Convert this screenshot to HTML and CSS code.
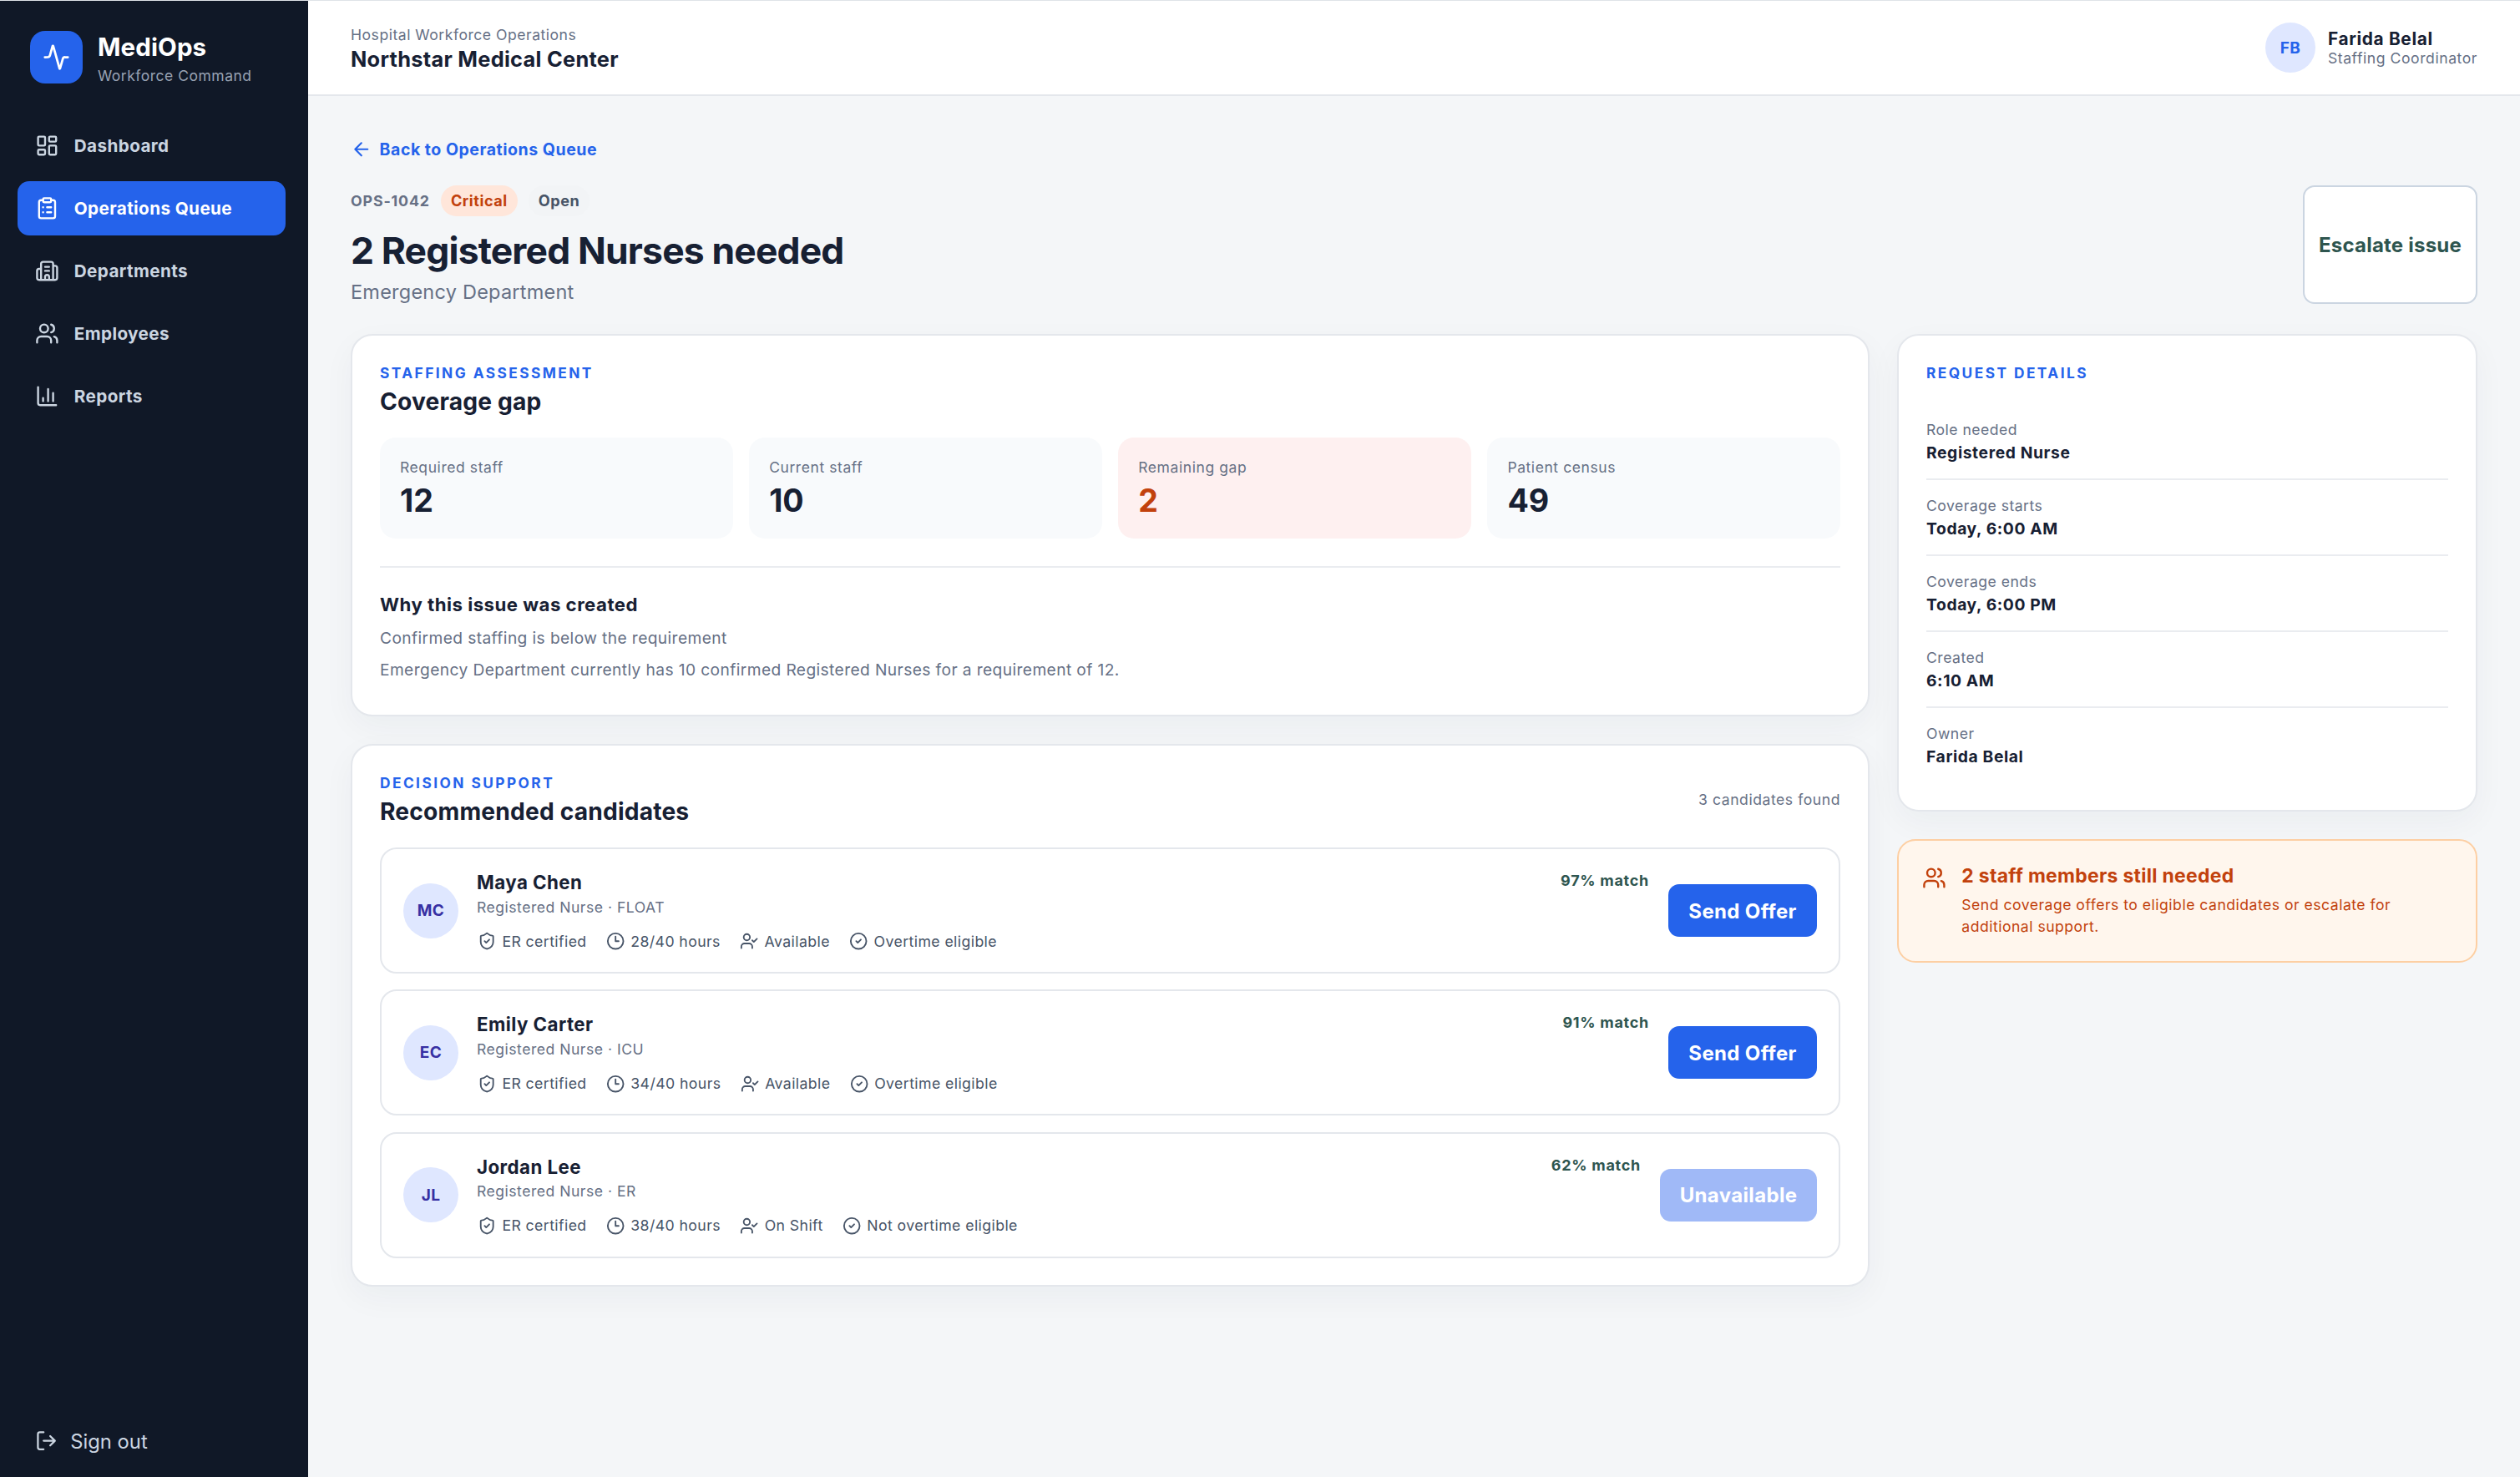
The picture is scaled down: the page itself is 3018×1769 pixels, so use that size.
FILE: index.html
```html
<!DOCTYPE html>
<html lang="en">
<head>
<meta charset="utf-8">
<title>MediOps</title>
<link rel="stylesheet" href="styles.css">
</head>
<body>
<svg class="sprite" aria-hidden="true">
  <symbol id="i-activity" viewBox="0 0 24 24"><path d="M22 12h-2.48a2 2 0 0 0-1.93 1.46l-2.35 8.36a.25.25 0 0 1-.48 0L9.24 2.18a.25.25 0 0 0-.48 0l-2.35 8.36A2 2 0 0 1 4.49 12H2"/></symbol>
  <symbol id="i-dashboard" viewBox="0 0 24 24"><rect width="7" height="9" x="3" y="3" rx="1"/><rect width="7" height="5" x="14" y="3" rx="1"/><rect width="7" height="9" x="14" y="12" rx="1"/><rect width="7" height="5" x="3" y="16" rx="1"/></symbol>
  <symbol id="i-clipboard" viewBox="0 0 24 24"><rect width="8" height="4" x="8" y="2" rx="1"/><path d="M16 4h2a2 2 0 0 1 2 2v14a2 2 0 0 1-2 2H6a2 2 0 0 1-2-2V6a2 2 0 0 1 2-2h2M12 11h4M12 16h4M8 11h.01M8 16h.01"/></symbol>
  <symbol id="i-building" viewBox="0 0 24 24"><path d="M10 12h4M10 8h4M14 21v-3a2 2 0 0 0-4 0v3M6 10H4a2 2 0 0 0-2 2v7a2 2 0 0 0 2 2h16a2 2 0 0 0 2-2V9a2 2 0 0 0-2-2h-2M6 21V5a2 2 0 0 1 2-2h8a2 2 0 0 1 2 2v16"/></symbol>
  <symbol id="i-users" viewBox="0 0 24 24"><path d="M16 21v-2a4 4 0 0 0-4-4H6a4 4 0 0 0-4 4v2M16 3.128a4 4 0 0 1 0 7.744M22 21v-2a4 4 0 0 0-3-3.87"/><circle cx="9" cy="7" r="4"/></symbol>
  <symbol id="i-chart" viewBox="0 0 24 24"><path d="M3 3v16a2 2 0 0 0 2 2h16M18 17V9M13 17V5M8 17v-3"/></symbol>
  <symbol id="i-logout" viewBox="0 0 24 24"><path d="m16 17 5-5-5-5M21 12H9M9 21H5a2 2 0 0 1-2-2V5a2 2 0 0 1 2-2h4"/></symbol>
  <symbol id="i-back" viewBox="0 0 24 24"><path d="m12 19-7-7 7-7M19 12H5"/></symbol>
  <symbol id="i-shield" viewBox="0 0 24 24"><path d="M20 13c0 5-3.5 7.5-7.66 8.95a1 1 0 0 1-.67-.01C7.5 20.5 4 18 4 13V6a1 1 0 0 1 1-1c2 0 4.5-1.2 6.24-2.72a1.17 1.17 0 0 1 1.52 0C14.51 3.81 17 5 19 5a1 1 0 0 1 1 1zM9 12l2 2 4-4"/></symbol>
  <symbol id="i-clock" viewBox="0 0 24 24"><circle cx="12" cy="12" r="10"/><path d="M12 6v6h4"/></symbol>
  <symbol id="i-usercheck" viewBox="0 0 24 24"><path d="m16 11 2 2 4-4M16 21v-2a4 4 0 0 0-4-4H6a4 4 0 0 0-4 4v2"/><circle cx="9" cy="7" r="4"/></symbol>
  <symbol id="i-check" viewBox="0 0 24 24"><circle cx="12" cy="12" r="10"/><path d="m9 12 2 2 4-4"/></symbol>
</svg>
<div class="app">
  <aside class="sidebar">
    <div class="brand">
      <div class="logo"><svg class="icon"><use href="#i-activity"/></svg></div>
      <div><div class="brand-name">MediOps</div><div class="brand-sub">Workforce Command</div></div>
    </div>
    <nav class="nav">
      <a class="nav-item"><svg class="icon"><use href="#i-dashboard"/></svg><span>Dashboard</span></a>
      <a class="nav-item active"><svg class="icon"><use href="#i-clipboard"/></svg><span>Operations Queue</span></a>
      <a class="nav-item"><svg class="icon"><use href="#i-building"/></svg><span>Departments</span></a>
      <a class="nav-item"><svg class="icon"><use href="#i-users"/></svg><span>Employees</span></a>
      <a class="nav-item"><svg class="icon"><use href="#i-chart"/></svg><span>Reports</span></a>
    </nav>
    <a class="signout"><svg class="icon"><use href="#i-logout"/></svg><span>Sign out</span></a>
  </aside>
  <div class="page">
    <header class="topbar">
      <div><div class="org-kind">Hospital Workforce Operations</div><div class="org-name">Northstar Medical Center</div></div>
      <div class="user">
        <div class="avatar user-avatar">FB</div>
        <div><div class="user-name">Farida Belal</div><div class="user-role">Staffing Coordinator</div></div>
      </div>
    </header>
    <main class="main">
      <a class="back"><svg class="icon"><use href="#i-back"/></svg><span>Back to Operations Queue</span></a>
      <div class="title-row">
        <div>
          <div class="tags-row"><span class="issue-id">OPS-1042</span><span class="pill critical">Critical</span><span class="pill open">Open</span></div>
          <h1 class="title">2 Registered Nurses needed</h1>
          <p class="subtitle">Emergency Department</p>
        </div>
        <button class="escalate">Escalate issue</button>
      </div>
      <div class="columns">
        <div class="col">
          <section class="card assessment">
            <div class="eyebrow">STAFFING ASSESSMENT</div>
            <h2 class="card-title">Coverage gap</h2>
            <div class="stats">
              <div class="stat"><div class="stat-label">Required staff</div><div class="stat-value">12</div></div>
              <div class="stat"><div class="stat-label">Current staff</div><div class="stat-value">10</div></div>
              <div class="stat gap"><div class="stat-label">Remaining gap</div><div class="stat-value">2</div></div>
              <div class="stat"><div class="stat-label">Patient census</div><div class="stat-value">49</div></div>
            </div>
            <div class="why">
              <h3 class="why-title">Why this issue was created</h3>
              <p class="why-text">Confirmed staffing is below the requirement</p>
              <p class="why-text">Emergency Department currently has 10 confirmed Registered Nurses for a requirement of 12.</p>
            </div>
          </section>
          <section class="card candidates">
            <div class="card-head">
              <div><div class="eyebrow">DECISION SUPPORT</div><h2 class="card-title">Recommended candidates</h2></div>
              <span class="count">3 candidates found</span>
            </div>
            <div class="list">
              <article class="cand">
                <div class="avatar">MC</div>
                <div class="cand-body">
                  <div class="cand-name">Maya Chen</div>
                  <div class="cand-role">Registered Nurse · FLOAT</div>
                  <div class="facts"><span class="fact"><svg class="icon"><use href="#i-shield"/></svg>ER certified</span><span class="fact"><svg class="icon"><use href="#i-clock"/></svg>28/40 hours</span><span class="fact"><svg class="icon"><use href="#i-usercheck"/></svg>Available</span><span class="fact"><svg class="icon"><use href="#i-check"/></svg>Overtime eligible</span></div>
                </div>
                <div class="match">97% match</div>
                <button class="offer">Send Offer</button>
              </article>
              <article class="cand">
                <div class="avatar">EC</div>
                <div class="cand-body">
                  <div class="cand-name">Emily Carter</div>
                  <div class="cand-role">Registered Nurse · ICU</div>
                  <div class="facts"><span class="fact"><svg class="icon"><use href="#i-shield"/></svg>ER certified</span><span class="fact"><svg class="icon"><use href="#i-clock"/></svg>34/40 hours</span><span class="fact"><svg class="icon"><use href="#i-usercheck"/></svg>Available</span><span class="fact"><svg class="icon"><use href="#i-check"/></svg>Overtime eligible</span></div>
                </div>
                <div class="match">91% match</div>
                <button class="offer">Send Offer</button>
              </article>
              <article class="cand">
                <div class="avatar">JL</div>
                <div class="cand-body">
                  <div class="cand-name">Jordan Lee</div>
                  <div class="cand-role">Registered Nurse · ER</div>
                  <div class="facts"><span class="fact"><svg class="icon"><use href="#i-shield"/></svg>ER certified</span><span class="fact"><svg class="icon"><use href="#i-clock"/></svg>38/40 hours</span><span class="fact"><svg class="icon"><use href="#i-usercheck"/></svg>On Shift</span><span class="fact"><svg class="icon"><use href="#i-check"/></svg>Not overtime eligible</span></div>
                </div>
                <div class="match">62% match</div>
                <button class="offer" disabled>Unavailable</button>
              </article>
            </div>
          </section>
        </div>
        <div class="col">
          <section class="card details">
            <div class="eyebrow">REQUEST DETAILS</div>
            <dl class="rows">
              <div class="row"><dt class="dt">Role needed</dt><dd class="dd">Registered Nurse</dd></div>
              <div class="row"><dt class="dt">Coverage starts</dt><dd class="dd">Today, 6:00 AM</dd></div>
              <div class="row"><dt class="dt">Coverage ends</dt><dd class="dd">Today, 6:00 PM</dd></div>
              <div class="row"><dt class="dt">Created</dt><dd class="dd">6:10 AM</dd></div>
              <div class="row"><dt class="dt">Owner</dt><dd class="dd">Farida Belal</dd></div>
            </dl>
          </section>
          <section class="alert">
            <svg class="icon"><use href="#i-users"/></svg>
            <div><h3 class="alert-title">2 staff members still needed</h3><p class="alert-text">Send coverage offers to eligible candidates or escalate for additional support.</p></div>
          </section>
        </div>
      </div>
    </main>
  </div>
</div>
</body>
</html>
```
FILE: styles.css
```css
* { box-sizing: border-box; margin: 0; padding: 0; }
body { font-family: Inter, "Liberation Sans", sans-serif; color: #172033; background: #f4f6f8; }
.sprite { position: absolute; width: 0; height: 0; }
.icon { display: block; flex: none; fill: none; stroke: currentColor; stroke-width: 2; stroke-linecap: round; stroke-linejoin: round; }
.app { display: flex; width: 3018px; height: 1769px; border-top: 1px solid #dfe3e8; overflow: hidden; }

.sidebar { width: 369px; flex: none; background: #101827; display: flex; flex-direction: column; padding: 36px 27px 27px 21px; }
.brand { display: flex; gap: 18px; padding-left: 15px; height: 63px; }
.logo { width: 63px; height: 63px; border-radius: 18px; background: #2563eb; color: #fff; display: grid; place-items: center; }
.logo .icon { width: 33px; height: 33px; }
.brand-name { font-size: 29.5px; font-weight: 700; line-height: 39px; letter-spacing: .1px; color: #fff; }
.brand-sub { font-size: 17.5px; line-height: 29px; letter-spacing: .5px; color: #98a2b3; }
.nav { display: flex; flex-direction: column; gap: 10px; margin-top: 42px; }
.nav-item { height: 65px; display: flex; align-items: center; gap: 18px; padding-left: 21px; border-radius: 14px; font-size: 20.7px; font-weight: 700; letter-spacing: .38px; color: #cbd5e1; }
.nav-item .icon { width: 28.8px; height: 28.8px; }
.nav-item.active { background: #2563eb; color: #fff; }
.signout { margin-top: auto; display: flex; align-items: center; gap: 15px; padding-left: 21px; height: 32px; color: #cbd5e1; font-size: 23.8px; }
.signout .icon { width: 27.2px; height: 27.2px; }

.page { flex: 1; display: flex; flex-direction: column; }
.topbar { height: 114px; background: #fff; border-bottom: 2px solid #e4e7ec; display: flex; align-items: center; justify-content: space-between; padding: 0 51px; }
.org-kind { font-size: 17.6px; line-height: 26px; letter-spacing: .5px; color: #667085; }
.org-name { font-size: 25.4px; font-weight: 700; line-height: 31px; letter-spacing: .27px; }
.user { display: flex; align-items: center; gap: 15px; }
.avatar { width: 66px; height: 66px; border-radius: 50%; background: #dfe7ff; color: #3730a3; display: grid; place-items: center; font-size: 19px; font-weight: 700; letter-spacing: .4px; flex: none; }
.user-avatar { width: 60px; height: 60px; color: #2563eb; }
.user-name { font-size: 20.8px; font-weight: 700; line-height: 23.4px; letter-spacing: .67px; margin-top: 2px; }
.user-role { font-size: 17.6px; line-height: 23.4px; letter-spacing: .55px; color: #667085; }

.main { padding: 50px 51px 0; }
.back { display: flex; align-items: center; gap: 9px; height: 28px; color: #2563eb; font-size: 19.5px; font-weight: 700; letter-spacing: .53px; }
.back .icon { width: 25.6px; height: 25.6px; }
.title-row { display: flex; justify-content: space-between; margin-top: 29px; height: 142px; }
.tags-row { display: flex; align-items: center; height: 37px; gap: 13px; }
.issue-id { font-size: 17.8px; font-weight: 700; letter-spacing: .85px; color: #667085; }
.pill { height: 37px; line-height: 37px; border-radius: 19px; padding: 0 12px; font-size: 18.1px; font-weight: 700; letter-spacing: .55px; }
.critical { background: #ffe6da; color: #c2410c; }
.open { background: #f2f4f6; color: #475467; }
.title { font-size: 44.4px; font-weight: 700; line-height: 56px; letter-spacing: -.82px; margin-top: 13px; }
.subtitle { font-size: 23.5px; line-height: 29px; letter-spacing: .23px; margin-top: 7px; color: #667085; }
.escalate { width: 209px; height: 142px; border: 2px solid #cbd5e1; border-radius: 14px; background: #fff; color: #2e554f; font: 700 24px Inter, sans-serif; letter-spacing: .22px; }

.columns { display: grid; grid-template-columns: 1819px 695px; gap: 33px; margin-top: 36px; }
.col { display: flex; flex-direction: column; gap: 33px; }
.card { background: #fff; border: 2px solid #e4e7ec; border-radius: 26px; padding: 34px 33px 32px; box-shadow: 0 13px 38px rgba(15, 40, 60, .045); }
.eyebrow { font-size: 17.3px; font-weight: 700; line-height: 22px; letter-spacing: 2.45px; color: #2563eb; }
.card-title { font-size: 28.2px; font-weight: 700; line-height: 34px; letter-spacing: .17px; margin-top: 6px; }
.assessment { height: 458px; }
.stats { display: grid; grid-template-columns: repeat(4, 1fr); gap: 19.5px; margin-top: 26px; }
.stat { height: 121px; padding: 23px 24px; border-radius: 19px; background: #f8fafc; }
.stat.gap { background: #fef0f0; }
.stat-label { font-size: 17.5px; line-height: 25px; letter-spacing: .58px; color: #667085; }
.stat-value { font-size: 37.6px; font-weight: 700; line-height: 42px; margin-top: 6.5px; }
.stat.gap .stat-value { color: #c2410c; }
.why { border-top: 2px solid #eaecf0; margin-top: 33px; padding-top: 30px; }
.why-title { font-size: 22.2px; font-weight: 700; line-height: 28px; letter-spacing: .49px; }
.why-text { font-size: 19.2px; line-height: 28px; letter-spacing: .39px; margin-top: 11.5px; color: #667085; }
.why-text + .why-text { margin-top: 10px; }

.card-head { display: flex; justify-content: space-between; align-items: center; }
.count { font-size: 17.6px; line-height: 22px; letter-spacing: .54px; margin-top: -1px; color: #667085; }
.list { display: flex; flex-direction: column; gap: 19.3px; margin-top: 26px; }
.cand { height: 151px; border: 2px solid #e4e7ec; border-radius: 20px; padding: 26px; display: flex; align-items: center; }
.cand-body { flex: 1; align-self: flex-start; margin-left: 22px; }
.cand-name { font-size: 22.3px; font-weight: 700; line-height: 28px; letter-spacing: .45px; }
.cand-role { font-size: 17.6px; line-height: 24px; letter-spacing: .49px; margin-top: 3.5px; color: #667085; }
.facts { display: flex; gap: 23.3px; margin-top: 17px; height: 24px; align-items: center; color: #475467; padding-left: 1px; }
.fact { display: flex; align-items: center; gap: 7px; font-size: 17.7px; line-height: 24px; letter-spacing: .4px; }
.fact .icon { width: 22.4px; height: 22.4px; }
.match { align-self: flex-start; font-size: 18px; font-weight: 700; line-height: 24px; letter-spacing: .72px; color: #2e554f; margin-right: 23px; }
.offer { height: 63px; width: 178px; border: 0; border-radius: 13px; background: #2563eb; color: #fff; font: 700 24px Inter, sans-serif; letter-spacing: .34px; padding-top: 1px; }
.offer:disabled { width: 188px; background: #a0b9f7; }

.details { height: 572px; }
.rows { margin-top: 26px; }
.row { height: 91px; padding-top: 18px; border-bottom: 2px solid #eaecf0; }
.row:last-child { border-bottom: 0; }
.dt { font-size: 17.6px; line-height: 26px; letter-spacing: .48px; color: #667085; }
.dd { font-size: 19.3px; font-weight: 700; line-height: 29px; letter-spacing: .6px; }
.alert { height: 148px; display: flex; gap: 18.5px; border: 2px solid #fdcfa3; border-radius: 22px; background: #fff6ed; color: #c2410c; padding: 28px; }
.alert .icon { width: 28.8px; height: 28.8px; margin-top: 2px; }
.alert-title { font-size: 22.9px; font-weight: 700; line-height: 28px; letter-spacing: .31px; }
.alert-text { font-size: 17.6px; line-height: 26px; letter-spacing: .49px; margin-top: 7.5px; max-width: 540px; }
```
